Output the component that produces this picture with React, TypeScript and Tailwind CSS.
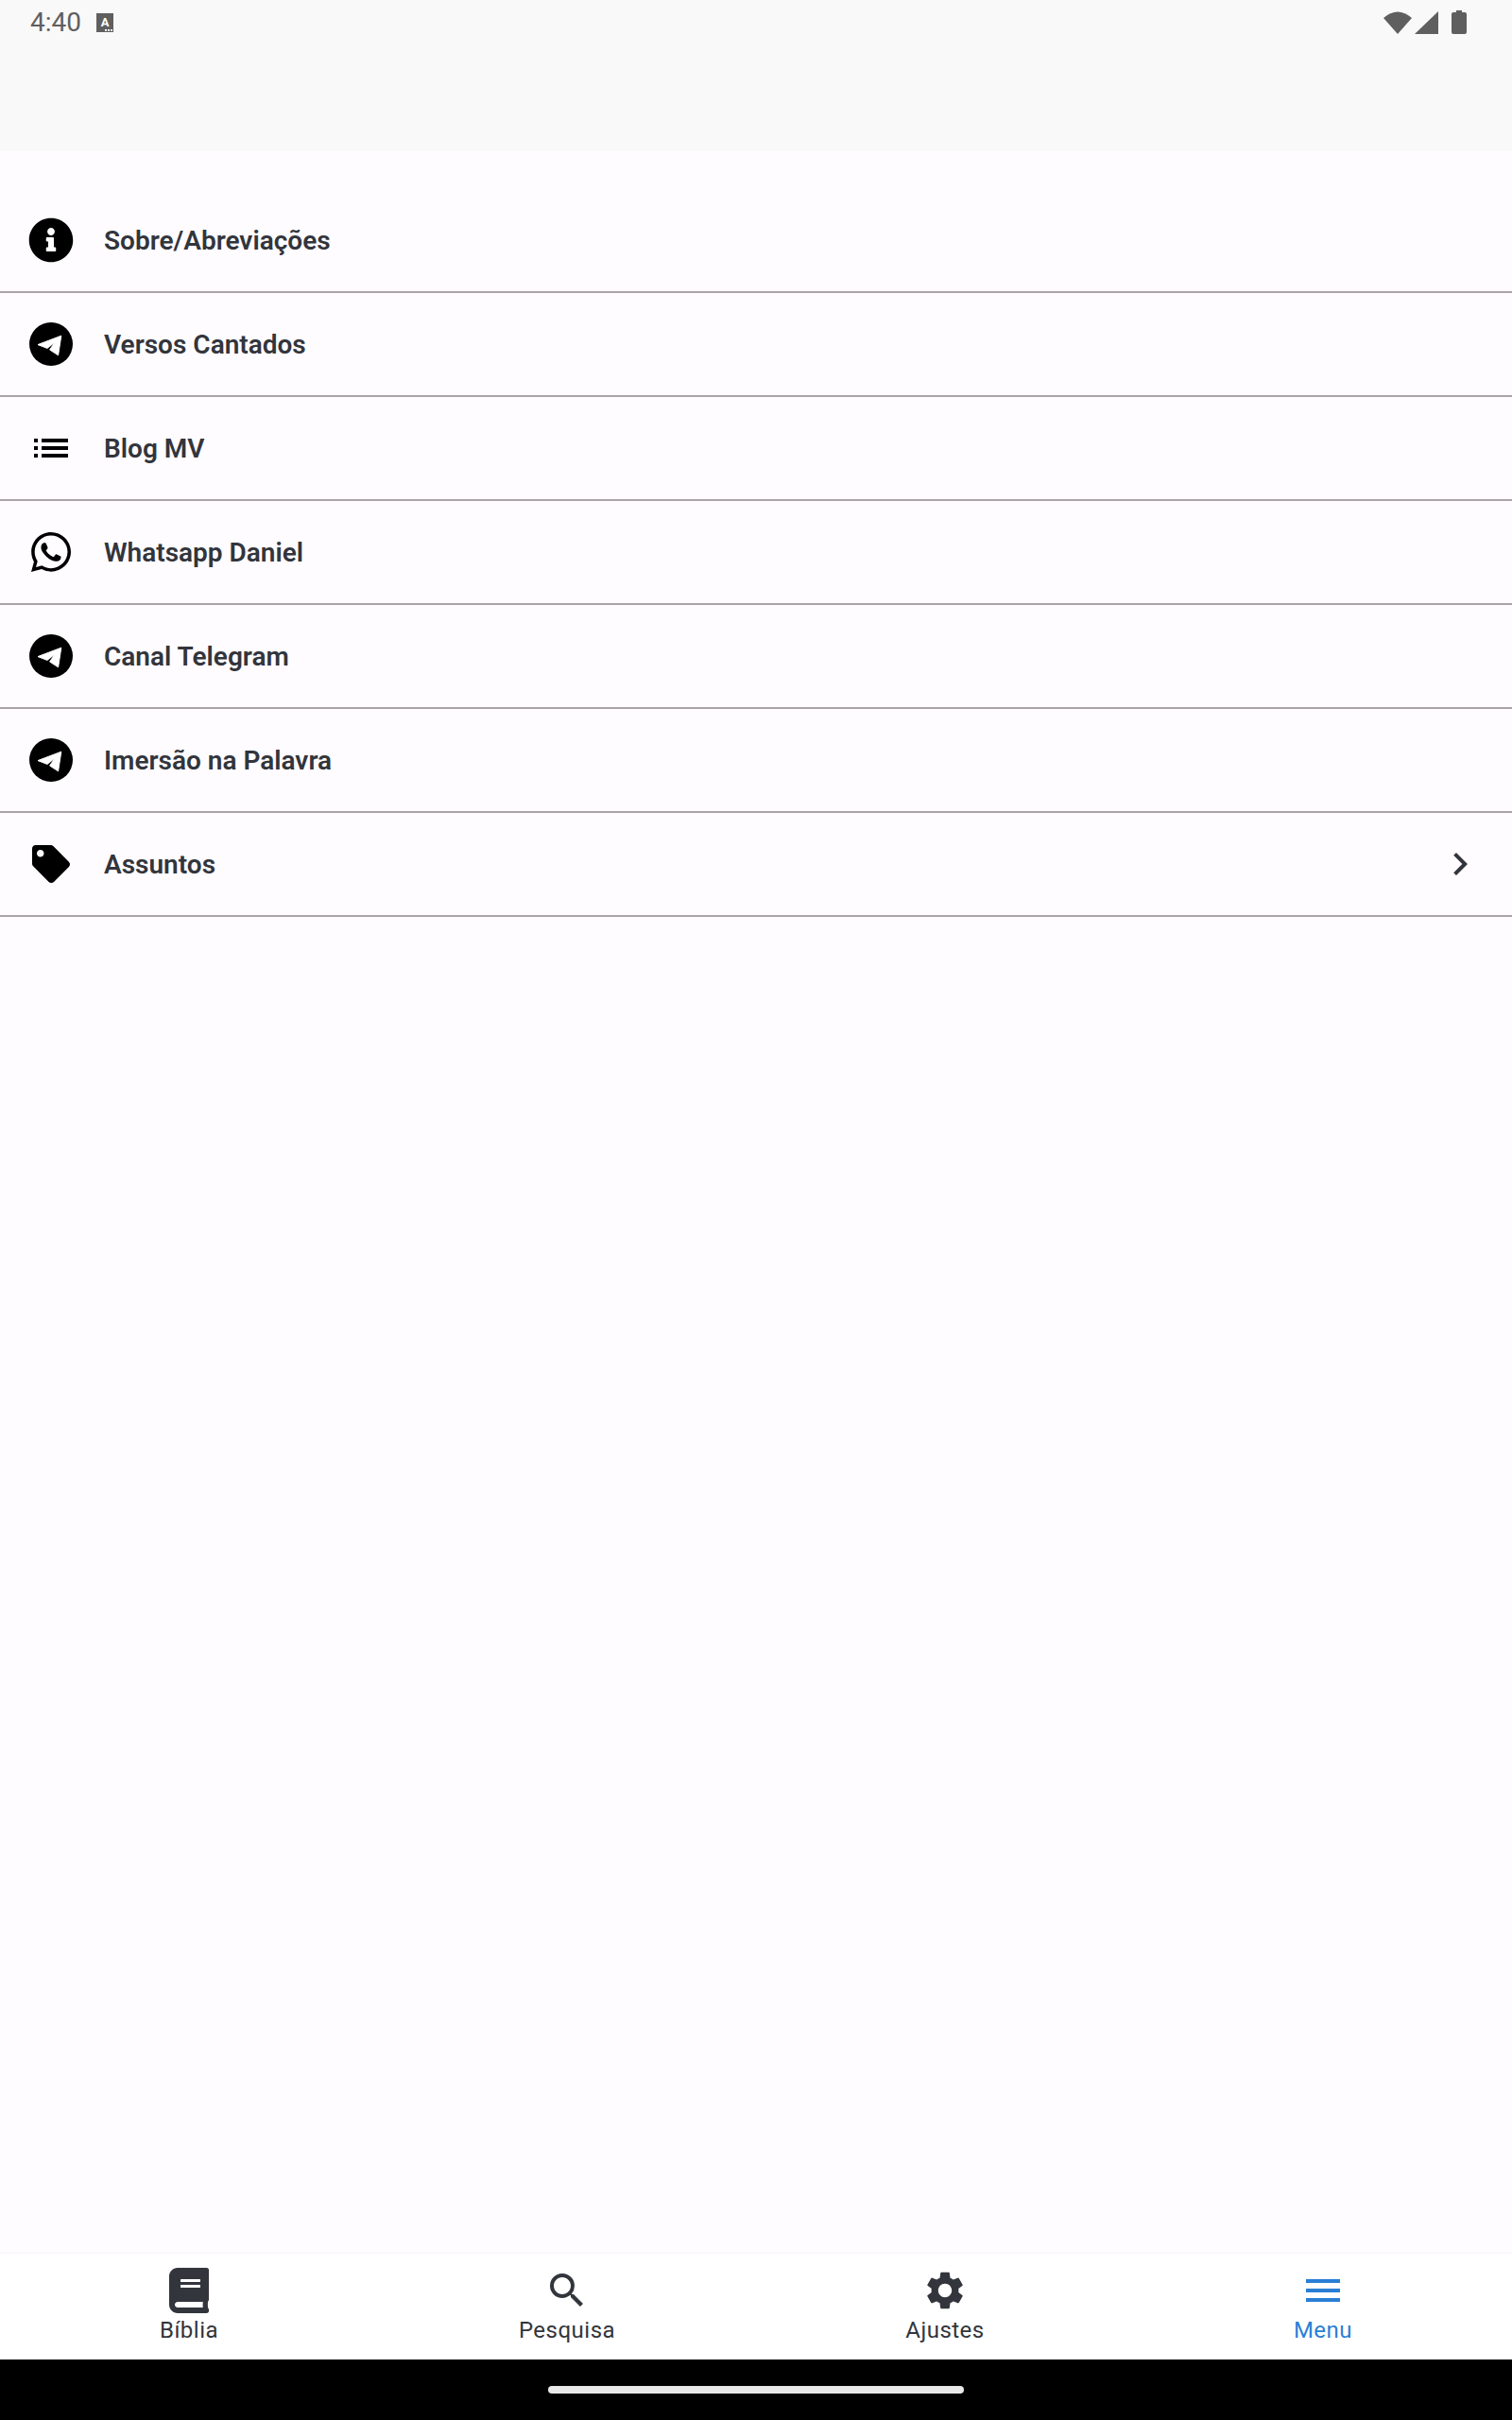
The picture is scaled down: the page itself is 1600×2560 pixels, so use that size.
import type { ReactNode } from 'react';
import { FaInfoCircle, FaWhatsapp, FaTag, FaBook } from 'react-icons/fa';
import { MdList, MdChevronRight, MdSearch, MdSettings, MdMenu } from 'react-icons/md';

function TelegramIcon() {
  return (
    <svg width="46" height="46" viewBox="0 0 46 46">
      <circle cx="23" cy="23" r="23" fill="#000" />
      <path
        d="M33.8 14.2 L9 23.6 L19 27.4 L27.2 21 L21.6 29 L30.6 34.8 Z"
        fill="#fff"
        stroke="#fff"
        strokeWidth="1"
        strokeLinejoin="round"
      />
    </svg>
  );
}

function StatusIcons() {
  return (
    <div className="flex items-center text-[#5f5f5f]">
      <svg width="30" height="25" viewBox="0 0 30 25" className="mr-[3px]">
        <path d="M0 8 Q15 -5 30 8 L15 25 Z" fill="currentColor" />
      </svg>
      <svg width="25" height="24" viewBox="0 0 25 24" className="mr-[14px]">
        <path d="M25 0 V24 H0 Z" fill="currentColor" />
      </svg>
      <svg width="16" height="25" viewBox="0 0 16 25">
        <path d="M5 0 H11 V2 H14 Q16 2 16 4 V23 Q16 25 14 25 H2 Q0 25 0 23 V4 Q0 2 2 2 H5 Z" fill="currentColor" />
      </svg>
    </div>
  );
}

const rows: { label: string; icon: ReactNode; chevron?: boolean }[] = [
  { label: 'Sobre/Abreviações', icon: <FaInfoCircle size={48} /> },
  { label: 'Versos Cantados', icon: <TelegramIcon /> },
  { label: 'Blog MV', icon: <MdList size={48} /> },
  { label: 'Whatsapp Daniel', icon: <FaWhatsapp size={48} /> },
  { label: 'Canal Telegram', icon: <TelegramIcon /> },
  { label: 'Imersão na Palavra', icon: <TelegramIcon /> },
  { label: 'Assuntos', icon: <FaTag size={40} className="-scale-x-100 -rotate-90" />, chevron: true },
];

const tabs: { label: string; icon: ReactNode; active?: boolean }[] = [
  { label: 'Bíblia', icon: <FaBook size={48} /> },
  { label: 'Pesquisa', icon: <MdSearch size={48} /> },
  { label: 'Ajustes', icon: <MdSettings size={48} /> },
  { label: 'Menu', icon: <MdMenu size={48} />, active: true },
];

export default function App() {
  return (
    <div className="flex flex-col w-[1600px] h-[2560px] bg-[#fffcff] font-['Roboto',sans-serif]">
      {/* Status bar */}
      <header className="h-[160px] bg-[#f9f9f9] shrink-0">
        <div className="flex items-center justify-between h-[47px] pl-[32px] pr-[48px] text-[#5f5f5f]">
          <div className="flex items-center gap-[16px]">
            <span className="text-[28px] leading-none">4:40</span>
            <span className="relative flex justify-center w-[18px] h-[20px] pt-[3px] bg-[#5f5f5f] text-white text-[13px] font-bold leading-none">
              A
              <span className="absolute right-[1px] bottom-[1px] flex gap-[1px]">
                <span className="w-[2px] h-[2px] bg-white" />
                <span className="w-[2px] h-[2px] bg-white" />
                <span className="w-[2px] h-[2px] bg-white" />
              </span>
            </span>
          </div>
          <StatusIcons />
        </div>
      </header>

      {/* List */}
      <main className="flex-1 pt-[40px]">
        {rows.map((row) => (
          <div key={row.label} className="flex items-center h-[110px] pl-[30px] pr-[31px] border-b-2 border-[#a8a4a8]">
            <span className="flex items-center justify-center w-[48px] h-[48px] text-black">{row.icon}</span>
            <span className="ml-[32px] flex-1 pt-[1px] text-[28px] font-semibold text-[#32353c]">{row.label}</span>
            {row.chevron && <MdChevronRight size={48} className="text-[#32353c]" />}
          </div>
        ))}
      </main>

      {/* Bottom navigation */}
      <nav className="grid grid-cols-4 h-[113px] bg-white border-t border-[#f9f3f8] shrink-0">
        {tabs.map((tab) => (
          <div key={tab.label} className={`flex flex-col items-center pt-[15px] ${tab.active ? 'text-[#2a7fd5]' : 'text-[#32353c]'}`}>
            <span className="flex items-center justify-center h-[48px]">{tab.icon}</span>
            <span className="text-[24px] leading-[36px] tracking-[0.5px]">{tab.label}</span>
          </div>
        ))}
      </nav>

      {/* Gesture bar */}
      <div className="flex items-center justify-center h-[64px] bg-black shrink-0">
        <div className="w-[440px] h-[8px] rounded-full bg-[#e8e8e8]" />
      </div>
    </div>
  );
}
